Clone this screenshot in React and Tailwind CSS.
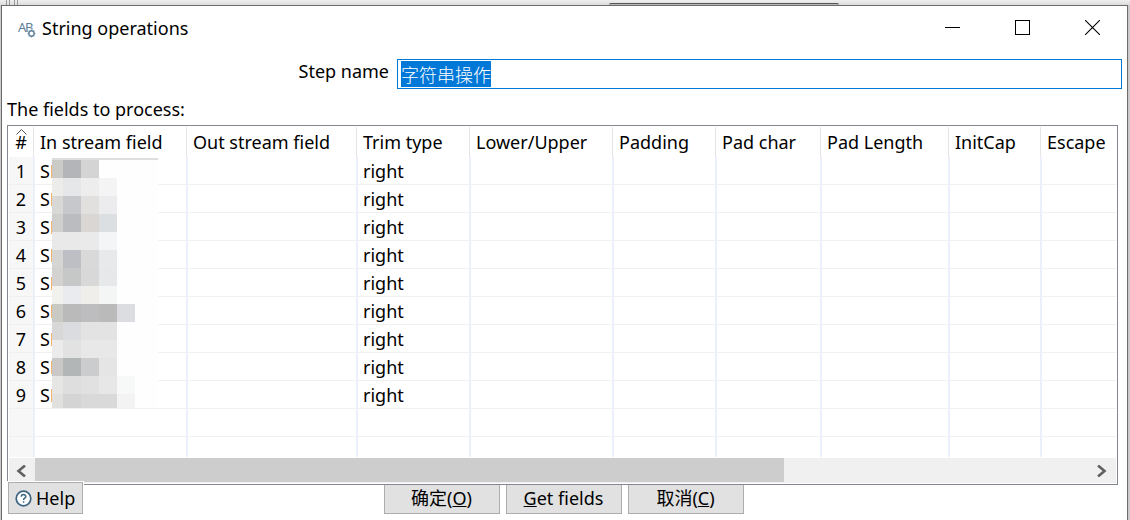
import React, { useEffect, useRef, useState } from 'react';

const columns = [
  { label: 'In stream field', width: 'w-[153px]' },
  { label: 'Out stream field', width: 'w-[170px]' },
  { label: 'Trim type', width: 'w-[113px]' },
  { label: 'Lower/Upper', width: 'w-[143px]' },
  { label: 'Padding', width: 'w-[103px]' },
  { label: 'Pad char', width: 'w-[105px]' },
  { label: 'Pad Length', width: 'w-[128px]' },
  { label: 'InitCap', width: 'w-[92px]' },
  { label: 'Escape', width: '' },
];

const rows = [1, 2, 3, 4, 5, 6, 7, 8, 9].map((n) => ({
  n,
  values: ['S', '', 'right', '', '', '', '', '', ''],
}));

// colours of the blocks that hide the field names, top to bottom
const mosaic = [
  ['#cacac7', '#b4b5b9', '#d4d4d5'],
  ['#ececea', '#e5e7e9', '#ededee', '#f4f4f5'],
  ['#d8d8d6', '#c6c8cc', '#e2e0df', '#ececef'],
  ['#cfcfcd', '#bbbcbf', '#d9d6d4', '#dbdfe2'],
  ['#e9e9e9', '#e9e9e9', '#eaeaea', '#f4f5f7'],
  ['#d5d5d3', '#bdbfc4', '#d9d9da', '#e7e9eb'],
  ['#d3d2d0', '#c6c8c7', '#d8d8d8', '#e7e8ea'],
  ['#f1f1ee', '#e9ebef', '#efeeeb', '#f4f6f5'],
  ['#c9cac4', '#bababb', '#bdbdc0', '#bababb', '#dcdde0'],
  ['#d8d8d9', '#dadcdf', '#e3e3e3', '#e3e3e3'],
  ['#ebebeb', '#e2e2e2', '#e8e8e8', '#e8e8e8'],
  ['#c9c8c6', '#b2b6b7', '#cbccce', '#e5e5e5'],
  ['#e6e6e4', '#dedede', '#e1e1e1', '#e7e7e7', '#f7f9f8'],
  ['#e0e0de', '#d4d4d4', '#d9d9d9', '#d9d9d9', '#f3f3f3'],
];

const Mosaic = () => (
  <svg
    className="absolute left-[42px] top-[31px] pointer-events-none"
    width="107"
    height="250"
    viewBox="0 0 107 250"
    shapeRendering="crispEdges"
    aria-hidden="true"
  >
    <rect x="1" width="106" height="250" fill="#fefefe" />
    <rect x="1" width="106" height="2" fill="#dedede" />
    {rows.map((row, i) => (
      <rect key={row.n} y={7 + i * 28} width="1" height="13" fill="#f7b56c" />
    ))}
    {mosaic.map((line, r) =>
      line.map((color, c) => (
        <rect
          key={`${r}-${c}`}
          x={c === 0 ? 1 : 12 + (c - 1) * 18}
          y={2 + r * 18}
          width={c === 0 ? 11 : 18}
          height="18"
          fill={color}
        />
      ))
    )}
  </svg>
);

const StepIcon = () => (
  <svg width="18" height="20" viewBox="0 0 18 20" fontFamily="Noto Sans" fontSize="13" fill="#5d7f99" aria-hidden="true">
    <text x="0" y="14">A</text>
    <text x="7" y="14">B</text>
    <circle cx="13.5" cy="15.5" r="4.2" fill="#fff" />
    <circle cx="13.5" cy="15.5" r="2.7" fill="none" stroke="#5d7f99" strokeWidth="1.4" />
    <path
      d="M13.5 11.6v1M13.5 18.4v1M9.6 15.5h1M16.4 15.5h1M10.8 12.8l.8.8M15.4 17.4l.8.8M10.8 18.2l.8-.8M15.4 13.6l.8-.8"
      stroke="#5d7f99"
    />
  </svg>
);

const DialogButton = ({ children }) => (
  <button
    type="button"
    className="h-8 w-[116px] border border-[#adadad] bg-[#e1e1e1] text-center leading-[30px]"
  >
    {children}
  </button>
);

const App = () => {
  const [stepName, setStepName] = useState('字符串操作');
  const inputRef = useRef(null);

  useEffect(() => {
    inputRef.current?.select();
  }, []);

  return (
    <div className="relative flex min-h-screen flex-col overflow-hidden bg-[#cbcbcb] pl-px pr-0.5 pt-[5px] font-['Noto_Sans','Noto_Sans_CJK_SC',sans-serif] text-[18px] leading-6 text-black">
      {/* Parent window that shows above the dialog */}
      <div className="absolute inset-x-0 top-0 h-[5px] bg-linear-to-b from-[#efefef] to-[#dcdcdc]">
        <div className="ml-1.5 flex h-full gap-0.5">
          <span className="w-px bg-[#999]" />
          <span className="mr-0.5 w-px bg-[#999]" />
          <span className="w-px bg-[#999]" />
          <span className="w-px bg-[#999]" />
        </div>
        <div className="absolute bottom-0 left-[609px] h-0.5 w-[230px] rounded-t-sm border-t border-[#555] bg-[#bbb]" />
      </div>

      <div className="relative flex grow flex-col border-x border-t border-[#6b6b6b] bg-white">
        {/* Title bar */}
        <header className="flex h-[43px] items-center pl-4">
          <StepIcon />
          <h1 className="ml-1.5 grow">String operations</h1>
          <button type="button" aria-label="Minimize" className="flex h-full w-[70px] items-center justify-center">
            <svg width="15" height="15" viewBox="0 0 15 15" shapeRendering="crispEdges">
              <path d="M0 7.5h15" stroke="#000" />
            </svg>
          </button>
          <button type="button" aria-label="Maximize" className="flex h-full w-[70px] items-center justify-center">
            <svg width="15" height="15" viewBox="0 0 15 15" shapeRendering="crispEdges">
              <path d="M.5.5h14v14H.5z" fill="none" stroke="#000" />
            </svg>
          </button>
          <button type="button" aria-label="Close" className="flex h-full w-[70px] items-center justify-center">
            <svg width="15" height="15" viewBox="0 0 15 15">
              <path d="M0 0l15 15M15 0L0 15" stroke="#000" strokeWidth="1.1" />
            </svg>
          </button>
        </header>

        {/* Step name */}
        <div className="mt-2.5 flex pr-[5px]">
          <label htmlFor="step-name" className="w-[395px] pr-2 text-right">Step name</label>
          <input
            id="step-name"
            ref={inputRef}
            type="text"
            value={stepName}
            onChange={(e) => setStepName(e.target.value)}
            className="h-[30px] min-w-0 grow border border-[#0078d7] px-[3px] font-['Noto_Sans_CJK_SC',sans-serif] font-light leading-6 outline-none selection:bg-[#0078d7] selection:text-white"
          />
        </div>

        <h2 className="mb-1 mt-2 pl-[5px]">The fields to process:</h2>

        {/* Fields */}
        <div className="relative z-10 ml-[5px] mr-[9px] border border-[#828790] bg-white p-px">
          <div className="relative overflow-hidden">
            <table className="w-full table-fixed border-separate border-spacing-0 whitespace-nowrap text-left">
              <thead>
                <tr className="h-[30px]">
                  <th className="relative w-6 p-0 text-center font-normal">
                    <svg className="absolute left-[7px] top-0.5" width="11" height="6" viewBox="0 0 11 6" aria-hidden="true">
                      <path d="M.5 5.5l5-5 5 5" fill="none" stroke="#555" />
                    </svg>
                    #
                  </th>
                  {columns.map((col) => (
                    <th key={col.label} className={`${col.width} border-l border-[#e5e5e5] p-0 pl-1.5 font-normal`}>
                      {col.label}
                    </th>
                  ))}
                </tr>
              </thead>
              <tbody>
                {rows.map((row) => (
                  <tr key={row.n} className="h-7">
                    <td className="border-b border-[#f0f0f0] bg-[#f7f7f7] p-0 text-center">{row.n}</td>
                    {row.values.map((value, i) => (
                      <td key={columns[i].label} className="border-b border-l-2 border-b-[#f0f0f0] border-l-[#ebf0fa] p-0 pl-[5px]">
                        {value}
                      </td>
                    ))}
                  </tr>
                ))}
                <tr className="h-7">
                  <td className="border-b border-[#f0f0f0] bg-[#f7f7f7] p-0" />
                  {columns.map((col) => (
                    <td key={col.label} className="border-b border-l-2 border-b-[#f0f0f0] border-l-[#ebf0fa] p-0" />
                  ))}
                </tr>
                <tr className="h-5">
                  <td className="bg-[#f7f7f7] p-0" />
                  {columns.map((col) => (
                    <td key={col.label} className="border-l-2 border-l-[#ebf0fa] p-0" />
                  ))}
                </tr>
              </tbody>
            </table>
            <Mosaic />
          </div>

          {/* Horizontal scrollbar */}
          <div className="mt-px flex h-[25px] bg-[#f0f0f0]">
            <button type="button" aria-label="Scroll left" className="flex w-[26px] items-center justify-center pr-0.5">
              <svg width="10" height="12" viewBox="0 0 10 12">
                <path d="M9 .5L2.5 6 9 11.5" fill="none" stroke="#606060" strokeWidth="2.6" />
              </svg>
            </button>
            <div className="grow">
              <div className="h-6 w-[71%] bg-[#cdcdcd]" />
            </div>
            <button type="button" aria-label="Scroll right" className="flex w-[26px] items-center justify-center pr-0.5">
              <svg width="10" height="12" viewBox="0 0 10 12">
                <path d="M1 .5L7.5 6 1 11.5" fill="none" stroke="#606060" strokeWidth="2.6" />
              </svg>
            </button>
          </div>
        </div>

        {/* Buttons, tucked under the lower edge of the table */}
        <footer className="-mt-[3px] grid grid-cols-[1fr_auto_1fr] pl-1.5 pr-2">
          <button
            type="button"
            className="relative z-20 flex h-8 w-[75px] items-center gap-1 border border-[#adadad] bg-[#e1e1e1] pl-1.5 shadow-[0_0_0_1px_#fff]"
          >
            <svg width="17" height="17" viewBox="0 0 17 17" aria-hidden="true">
              <circle cx="8.5" cy="8.5" r="7.3" fill="#fff" stroke="#3d6480" strokeWidth="1.7" />
              <path d="M6.3 6.8c0-3 4.5-2.9 4.5-.2 0 1.6-2.2 1.6-2.2 3.3M8.6 11.2v1.6" fill="none" stroke="#3d6480" strokeWidth="1.5" />
            </svg>
            Help
          </button>
          <div className="flex gap-1.5">
            <DialogButton>确定(<u>O</u>)</DialogButton>
            <DialogButton><u>G</u>et fields</DialogButton>
            <DialogButton>取消(<u>C</u>)</DialogButton>
          </div>
        </footer>
      </div>
    </div>
  );
};

export default App;
